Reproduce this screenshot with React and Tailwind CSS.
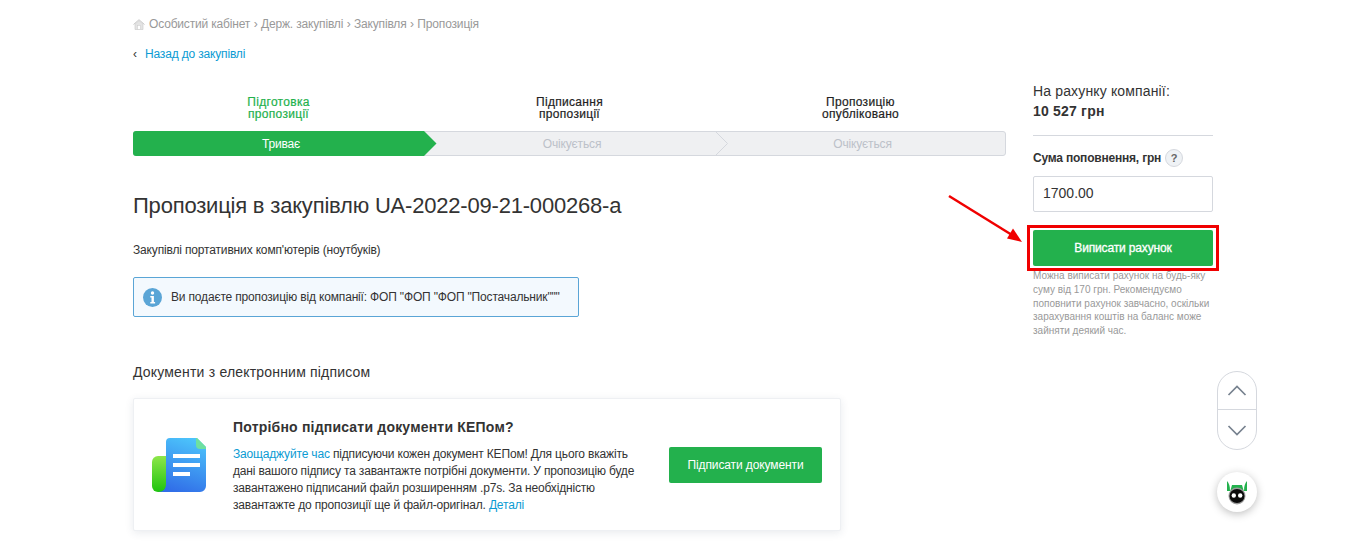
import React from 'react';

const HomeIcon = () => (
  <svg width="12" height="11" viewBox="0 0 12 11" className="shrink-0">
    <path d="M0.5 5.5 6 0.7l5.5 4.8" fill="none" stroke="#c9c9c9" strokeWidth="1" />
    <path d="M2 5v5.5h8V5L6 1.6z" fill="#e4e4e4" stroke="#cfcfcf" strokeWidth="0.7" />
    <rect x="4.6" y="6.4" width="2.8" height="4" fill="#fff" stroke="#cfcfcf" strokeWidth="0.6" />
  </svg>
);

const Stepper = () => (
  <div className="relative flex h-[25px] rounded-[3px] border border-[#d5d8de] bg-[#eff0f2] text-xs tracking-[-0.15px]">
    <div className="relative flex w-[291px] items-center justify-center rounded-l-[3px] bg-[#23b14d] -my-px -ml-px h-[25px] pl-[5px] text-white">
      Триває
      <svg width="13" height="25" viewBox="0 0 13 25" className="absolute left-full top-0">
        <path d="M0 0 12.5 12.5 0 25z" fill="#23b14d" />
      </svg>
    </div>
    <div className="flex w-[291px] items-center justify-center pl-[5px] text-[#bcc1c9]">Очікується</div>
    <div className="relative flex flex-1 items-center justify-center pl-[5px] text-[#bcc1c9]">
      Очікується
      <svg width="14" height="25" viewBox="0 0 14 25" className="absolute left-0 -top-px">
        <path d="M0 0 12.5 12.5 0 25" fill="none" stroke="#d5d8de" />
      </svg>
    </div>
  </div>
);

const DocIcon = () => (
  <svg width="54" height="54" viewBox="0 0 54 54">
    <defs>
      <linearGradient id="g1" x1="0" y1="0" x2="0" y2="1">
        <stop offset="0" stopColor="#8ee64a" />
        <stop offset="1" stopColor="#1fc40f" />
      </linearGradient>
      <linearGradient id="g2" x1="0.7" y1="0" x2="0.4" y2="1">
        <stop offset="0" stopColor="#4cc4fb" />
        <stop offset="1" stopColor="#316fe8" />
      </linearGradient>
    </defs>
    <path d="M6 18h14v36H6a6 6 0 0 1-6-6V24a6 6 0 0 1 6-6z" fill="url(#g1)" />
    <path d="M18 0h27l9 9v39a6 6 0 0 1-6 6H6c5 0 8-3 8-8V4a4 4 0 0 1 4-4z" fill="url(#g2)" />
    <path d="M44 0h1l9 9v2h-6a4 4 0 0 1-4-4z" fill="#6ee0a0" />
    <rect x="21" y="16" width="27" height="4" fill="#fff" />
    <rect x="21" y="25" width="27" height="4" fill="#fff" />
    <rect x="21" y="34" width="17" height="4" fill="#fff" />
  </svg>
);

const BotIcon = () => (
  <svg width="22" height="26" viewBox="0 0 22 26">
    <path d="M1 2c2 2 3 5 3 10H1z" fill="#23b14d" />
    <path d="M21 2c-2 2-3 5-3 10h3z" fill="#23b14d" />
    <path d="M6 6h10l2 7H4z" fill="#23b14d" />
    <circle cx="11" cy="17" r="8.5" fill="#9a9a9a" />
    <ellipse cx="11" cy="17" rx="7.5" ry="7" fill="#0b0b0b" />
    <circle cx="7.8" cy="16.5" r="2.2" fill="#fff" />
    <circle cx="14.2" cy="16.5" r="2.2" fill="#fff" />
  </svg>
);

const App = () => {
  return (
    <div className="relative h-[548px] w-[1345px] overflow-hidden bg-white [font-family:'Liberation_Sans',Arial,sans-serif] text-[#333]">
      <div className="flex gap-[27px] pl-[133px]">
        {/* Main column */}
        <div className="w-[873px] shrink-0">
          <div className="mt-[17px] flex h-[14px] items-center text-xs tracking-[-0.17px] text-[#999]">
            <HomeIcon />
            <span className="ml-[4px]">Особистий кабінет</span>
            <span className="mx-[3.5px]">›</span>
            <span>Держ. закупівлі</span>
            <span className="mx-[3.5px]">›</span>
            <span>Закупівля</span>
            <span className="mx-[3.5px]">›</span>
            <span>Пропозиція</span>
          </div>

          <div className="mt-[16px] flex h-[14px] items-center text-xs tracking-[-0.17px]">
            <span className="w-[12px] text-[#333]">‹</span>
            <a className="text-[#0b9bd3]">Назад до закупівлі</a>
          </div>

          <div className="mt-[35px] grid grid-cols-3 text-center text-xs leading-[12px] tracking-[0.3px] [-webkit-text-stroke:0.2px]">
            <div className="text-[#23b14d]">Підготовка<br />пропозиції</div>
            <div className="text-[#222]">Підписання<br />пропозиції</div>
            <div className="text-[#222]">Пропозицію<br />опубліковано</div>
          </div>

          <div className="mt-[11px]">
            <Stepper />
          </div>

          <h1 className="mt-[36px] text-[22px] leading-[28px] tracking-[-0.2px] text-[#333]">Пропозиція в закупівлю UA-2022-09-21-000268-а</h1>

          <p className="mt-[22px] text-xs leading-[16px] tracking-[-0.16px]">Закупівлі портативних комп'ютерів (ноутбуків)</p>

          <div className="mt-[19px] flex h-[40px] w-[446px] items-center rounded-[2px] border border-[#5aa5d6] bg-[#f3f9fe] pl-[9px]">
            <svg width="19" height="19" viewBox="0 0 19 19" className="shrink-0">
              <circle cx="9.5" cy="9.5" r="9.5" fill="#5aa5d6" />
              <circle cx="9.5" cy="5" r="1.7" fill="#fff" />
              <path d="M7.3 8h3.6v6h1.2v1.4H7.3V14h1.2V9.4H7.3z" fill="#fff" />
            </svg>
            <span className="ml-[9px] text-xs tracking-[-0.17px]">Ви подаєте пропозицію від компанії: ФОП "ФОП "ФОП "Постачальник"""</span>
          </div>

          <h2 className="mt-[46px] text-sm leading-[18px] tracking-[0.19px]">Документи з електронним підписом</h2>

          <div className="mt-[17px] flex h-[133px] w-[708px] items-center rounded-[2px] border border-[#eef0f3] bg-white pl-[18px] shadow-[0_2px_8px_rgba(40,60,90,0.1)]">
            <div className="shrink-0">
              <DocIcon />
            </div>
            <div className="ml-[27px] w-[420px] shrink-0 pt-[3px]">
              <div className="text-sm font-bold leading-[18px] tracking-[0.2px]">Потрібно підписати документи КЕПом?</div>
              <p className="mt-[10px] text-xs leading-[16.8px] tracking-[-0.17px]">
                <a className="text-[#0b9bd3]">Заощаджуйте час</a> підписуючи кожен документ КЕПом! Для цього вкажіть дані вашого підпису та завантажте потрібні документи. У пропозицію буде завантажено підписаний файл розширенням .p7s. За необхідністю завантажте до пропозиції ще й файл-оригінал. <a className="text-[#0b9bd3]">Деталі</a>
              </p>
            </div>
            <button className="ml-[16px] h-[36px] w-[153px] rounded-[2px] bg-[#23b14d] text-xs tracking-[-0.1px] text-white">Підписати документи</button>
          </div>
        </div>

        {/* Balance column */}
        <div className="w-[180px] shrink-0 pt-[82px]">
          <div className="text-sm leading-[18px] tracking-[0.15px]">На рахунку компанії:</div>
          <div className="mt-[2px] text-sm font-bold leading-[18px] tracking-[0.2px]">10 527 грн</div>
          <div className="mt-[15px] border-t border-[#d5d8de]" />
          <div className="mt-[13px] flex h-[18px] items-center text-xs font-bold tracking-[-0.2px]">
            Сума поповнення, грн
            <span className="ml-[4px] flex h-[18px] w-[18px] items-center justify-center rounded-full border border-[#d5d8de] bg-[#eff2f5] text-[11px] text-[#666]">?</span>
          </div>
          <div className="mt-[9px] flex h-[36px] items-center rounded-[2px] border border-[#d5d8de] pb-[2px] pl-[9px] text-sm">1700.00</div>
          <div className="relative mt-[18px]">
            <button className="h-[36px] w-full rounded-[2px] bg-[#23b14d] text-xs tracking-[-0.15px] text-white [-webkit-text-stroke:0.3px]">Виписати рахунок</button>
            <div className="absolute -inset-x-[6px] -inset-y-[5px] border-[3px] border-[#f00000]" />
          </div>
          <p className="mt-[3px] text-[10px] leading-[13.8px] text-[#999]">
            Можна виписати рахунок на будь-яку суму від 170 грн. Рекомендуємо поповнити рахунок завчасно, оскільки зарахування коштів на баланс може зайняти деякий час.
          </p>
        </div>
      </div>

      {/* Annotation arrow */}
      <svg width="80" height="54" viewBox="0 0 80 54" className="absolute left-[948px] top-[194px]">
        <path d="M1 2 64 41" stroke="#f00000" strokeWidth="2.5" />
        <path d="M74 48 59 44.5 65 34.5z" fill="#f00000" />
      </svg>

      {/* Scroll buttons */}
      <div className="absolute left-[1217px] top-[371px] flex h-[79px] w-[40px] flex-col rounded-[20px] border border-[#d5d8de] bg-white">
        <div className="flex h-[38px] items-center justify-center border-b border-[#d5d8de]">
          <svg width="20" height="11" viewBox="0 0 20 11"><path d="M1.5 10 10 1.5 18.5 10" fill="none" stroke="#77828f" strokeWidth="1.7" /></svg>
        </div>
        <div className="flex flex-1 items-center justify-center pt-[1px]">
          <svg width="20" height="11" viewBox="0 0 20 11"><path d="M1.5 1 10 9.5 18.5 1" fill="none" stroke="#77828f" strokeWidth="1.7" /></svg>
        </div>
      </div>

      {/* Chat bot */}
      <div className="absolute left-[1217px] top-[472px] flex h-[40px] w-[40px] items-center justify-center rounded-full bg-white shadow-[0_2px_8px_rgba(0,0,0,0.25)]">
        <BotIcon />
      </div>
    </div>
  );
};

export default App;
